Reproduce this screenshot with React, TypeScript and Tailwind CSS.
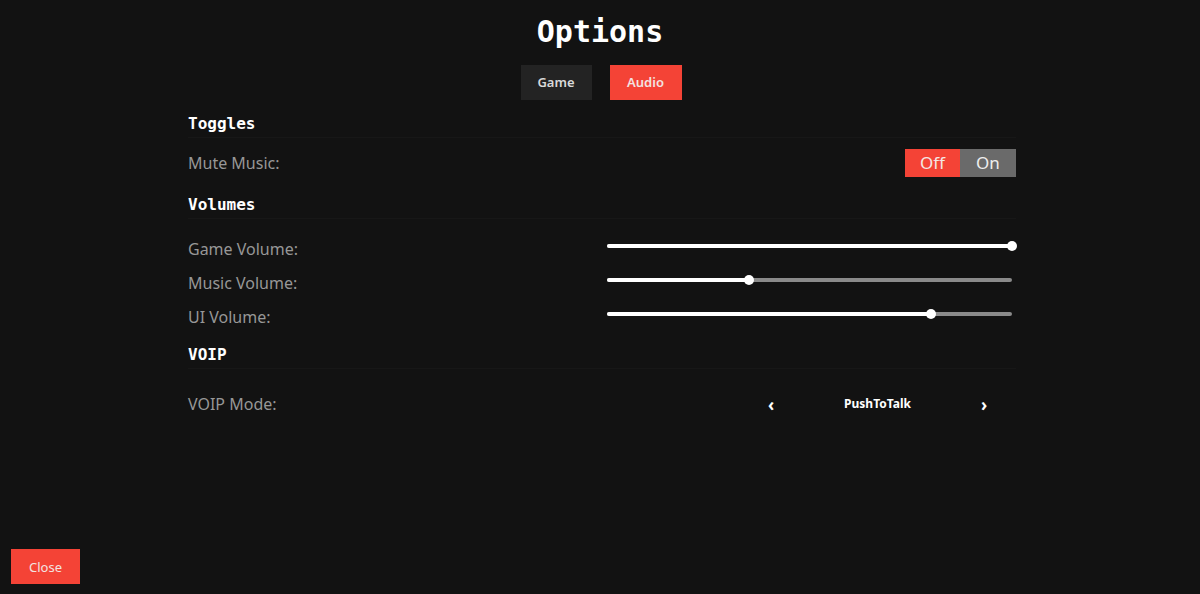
import React from 'react';

const mono = { fontFamily: '"DejaVu Sans Mono", "Liberation Mono", monospace' };

function SectionTitle({ title, className = '' }: { title: string; className?: string }) {
  return (
    <div className={`border-b border-[#171717] pb-[3px] ${className}`}>
      <h2 className="text-[16px] leading-[20px] font-bold text-white" style={mono}>
        {title}
      </h2>
    </div>
  );
}

function Slider({ value }: { value: number }) {
  return (
    <div className="relative h-[10px] w-full">
      <div className="absolute left-0 right-0 top-[3px] h-[4px] rounded-full bg-[#8a8a8a]" />
      <div
        className="absolute left-0 top-[3px] h-[4px] rounded-full bg-white"
        style={{ width: `${value}%` }}
      />
      <div
        className="absolute top-0 h-[10px] w-[10px] -translate-x-1/2 rounded-full bg-white"
        style={{ left: `${value}%` }}
      />
    </div>
  );
}

function VolumeRow({ label, value }: { label: string; value: number }) {
  return (
    <div className="grid h-[34px] grid-cols-2 items-center">
      <span className="text-[16px] text-[#979797]">{label}</span>
      <div className="mb-[7px] pl-[5px] pr-[4px]">
        <Slider value={value} />
      </div>
    </div>
  );
}

export default function App() {
  return (
    <div
      className="flex min-h-screen flex-col bg-[#121212] text-white"
      style={{ fontFamily: '"Noto Sans", "Open Sans", sans-serif' }}
    >
      <h1 className="pt-[12px] text-center text-[30px] leading-[40px] font-bold" style={mono}>
        Options
      </h1>

      <div className="mt-[13px] flex justify-center gap-[18px] pl-[2px]">
        <button className="h-[35px] w-[71px] bg-[#232323] text-[13px] font-semibold text-[#d9d9d9]">
          Game
        </button>
        <button className="h-[35px] w-[72px] bg-[#f44336] text-[13px] font-semibold text-[#f3e3e1]">
          Audio
        </button>
      </div>

      <div className="mx-auto w-[832px] pl-[4px]">
        <SectionTitle title="Toggles" className="mt-[14px]" />
        <div className="mt-[8px] flex h-[34px] items-center justify-between">
          <span className="text-[16px] text-[#979797]">Mute Music:</span>
          <div className="flex h-[28px] text-[17px]">
            <span className="flex w-[55px] items-center justify-center bg-[#f44336] text-[#f5e6e4]">Off</span>
            <span className="flex w-[56px] items-center justify-center bg-[#6a6a6a] text-[#eeeeee]">On</span>
          </div>
        </div>

        <SectionTitle title="Volumes" className="mt-[15px]" />
        <div className="mt-[13px]">
          <VolumeRow label="Game Volume:" value={100} />
          <VolumeRow label="Music Volume:" value={35} />
          <VolumeRow label="UI Volume:" value={80} />
        </div>

        <SectionTitle title="VOIP" className="mt-[11px]" />
        <div className="mt-[18px] flex h-[34px] items-center justify-between">
          <span className="text-[16px] text-[#979797]">VOIP Mode:</span>
          <div className="mr-[22px] flex w-[233px] items-center justify-between text-[12px] font-bold">
            <button className="w-[20px] text-center text-[17px] leading-none">‹</button>
            <span>PushToTalk</span>
            <button className="w-[20px] text-center text-[17px] leading-none">›</button>
          </div>
        </div>
      </div>

      <div className="mt-auto mb-[10px] ml-[11px]">
        <button className="h-[35px] w-[69px] bg-[#f44336] pt-[2px] text-[13px] text-[#f3e3e1]">Close</button>
      </div>
    </div>
  );
}
